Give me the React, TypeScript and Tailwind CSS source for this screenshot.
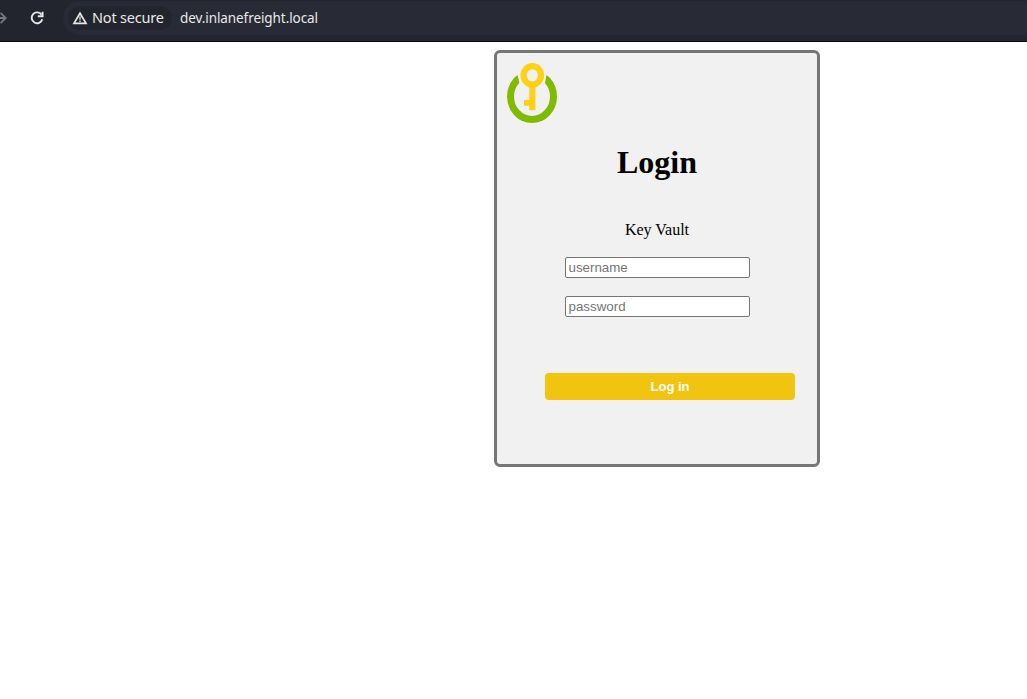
function AddressBar() {
  return (
    <header className="flex h-[42px] items-start border-b border-[#090a0e] bg-[#23252e] pt-px text-[#e8e8e6]">
      <svg className="mt-[10px] h-[14px] w-[7px] shrink-0" viewBox="0 0 7 14" fill="none" stroke="#777981" strokeWidth="1.8">
        <path d="M-5 7H5.6M0.6 1.8L5.8 7L0.6 12.2" />
      </svg>
      <svg className="ml-[22px] mt-[8px] h-[18px] w-[16px] shrink-0" viewBox="0 0 16 18" fill="none" stroke="#e8e8e6" strokeWidth="1.9">
        <path d="M12.6 5.8A5.4 5.4 0 1 0 13.3 10.2" />
        <path d="M13.6 2.8V7.3H8.8" />
      </svg>
      <div className="ml-[18px] flex h-[34px] flex-1 items-center rounded-l-full bg-[#282a36] pl-[5px]">
        <div className="flex h-[24px] w-[104px] items-center rounded-full bg-[#23252e] pl-[4px]">
          <svg className="mt-[-1px] h-[14px] w-[16px] shrink-0" viewBox="0 0 16 14" fill="none" stroke="#e8e8e6">
            <path d="M8 2.2L14 12.4H2Z" strokeWidth="1.7" />
            <path d="M8 5.6V8.8M8 9.6V11" strokeWidth="1.3" />
          </svg>
          <span className="ml-[4px] mt-[-2px] whitespace-nowrap font-['Noto_Sans',sans-serif] text-[14.5px] leading-[20px] tracking-[-0.2px]">Not secure</span>
        </div>
        <span className="ml-[8px] whitespace-nowrap font-['Noto_Sans',sans-serif] text-[13.5px] leading-[20px] tracking-[-0.08px]">dev.inlanefreight.local</span>
      </div>
    </header>
  );
}

function KeyLogo() {
  return (
    <svg className="h-[60px] w-[50px]" viewBox="0 0 50 60" fill="none">
      <ellipse cx="25" cy="33.5" rx="21.5" ry="23" stroke="#80ba01" strokeWidth="7" />
      <path d="M10.5 5V12L12.4 19.5L18 28H32L37.9 20.5L39.5 12V5L31 0H18Z" fill="#f1f1f1" />
      <ellipse cx="25.3" cy="12.3" rx="8.7" ry="9.2" stroke="#fcd116" strokeWidth="6.2" />
      <path fill="#fcd116" d="M22.3 22H28.4V47.3H22.3V42.8H17V37H22.3Z" />
    </svg>
  );
}

function Field({ label, type }: { label: string; type: string }) {
  return (
    <input
      type={type}
      placeholder={label}
      aria-label={label}
      className="block h-[21px] w-[185px] rounded-[2px] border border-[#767676] bg-white px-[2.5px] py-px font-['Liberation_Sans',sans-serif] text-[13.333px] leading-[15px] text-black placeholder:text-[#757575]"
    />
  );
}

export default function App() {
  return (
    <div className="min-h-screen bg-white text-black">
      <AddressBar />
      <main className="pl-[494px] pt-[8px]">
        <form
          onSubmit={(e) => e.preventDefault()}
          className="flex h-[417px] w-[326px] flex-col items-center rounded-[6px] border-3 border-[#767676] bg-[#f1f1f1] px-[10px] pt-[10px] font-['Liberation_Serif',serif]"
        >
          <div className="self-start">
            <KeyLogo />
          </div>
          <h1 className="mt-[21px] text-[32px] font-bold leading-[37px]">Login</h1>
          <p className="mt-[40px] text-[16px] leading-[18px]">Key Vault</p>
          <div className="mt-[18px] flex flex-col gap-[18px] pl-px">
            <Field label="username" type="text" />
            <Field label="password" type="password" />
          </div>
          <button
            type="submit"
            className="ml-[38px] mt-[56px] h-[27px] w-[250px] self-start rounded-[4px] bg-[#f1c40f] font-['Liberation_Sans',sans-serif] text-[13px] font-bold leading-[15px] text-white"
          >
            Log in
          </button>
        </form>
      </main>
    </div>
  );
}
